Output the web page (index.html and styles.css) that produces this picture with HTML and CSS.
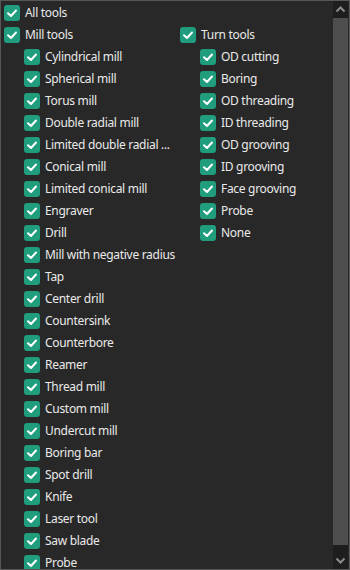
FILE: index.html
```html
<!DOCTYPE html>
<html>
<head>
<meta charset="utf-8">
<link rel="stylesheet" href="styles.css">
</head>
<body>
<div class="panel">
  <div class="content">
    <div class="row lvl0"><span class="cb"><svg viewBox="0 0 16 16"><polyline points="4,8.2 7,11 12,5.5"/></svg></span><span class="lbl">All tools</span></div>
    <div class="cols">
      <div class="col left">
        <div class="row lvl0"><span class="cb"><svg viewBox="0 0 16 16"><polyline points="4,8.2 7,11 12,5.5"/></svg></span><span class="lbl">Mill tools</span></div>
        <div class="row lvl1"><span class="cb"><svg viewBox="0 0 16 16"><polyline points="4,8.2 7,11 12,5.5"/></svg></span><span class="lbl">Cylindrical mill</span></div>
        <div class="row lvl1"><span class="cb"><svg viewBox="0 0 16 16"><polyline points="4,8.2 7,11 12,5.5"/></svg></span><span class="lbl">Spherical mill</span></div>
        <div class="row lvl1"><span class="cb"><svg viewBox="0 0 16 16"><polyline points="4,8.2 7,11 12,5.5"/></svg></span><span class="lbl">Torus mill</span></div>
        <div class="row lvl1"><span class="cb"><svg viewBox="0 0 16 16"><polyline points="4,8.2 7,11 12,5.5"/></svg></span><span class="lbl">Double radial mill</span></div>
        <div class="row lvl1"><span class="cb"><svg viewBox="0 0 16 16"><polyline points="4,8.2 7,11 12,5.5"/></svg></span><span class="lbl">Limited double radial ...</span></div>
        <div class="row lvl1"><span class="cb"><svg viewBox="0 0 16 16"><polyline points="4,8.2 7,11 12,5.5"/></svg></span><span class="lbl">Conical mill</span></div>
        <div class="row lvl1"><span class="cb"><svg viewBox="0 0 16 16"><polyline points="4,8.2 7,11 12,5.5"/></svg></span><span class="lbl">Limited conical mill</span></div>
        <div class="row lvl1"><span class="cb"><svg viewBox="0 0 16 16"><polyline points="4,8.2 7,11 12,5.5"/></svg></span><span class="lbl">Engraver</span></div>
        <div class="row lvl1"><span class="cb"><svg viewBox="0 0 16 16"><polyline points="4,8.2 7,11 12,5.5"/></svg></span><span class="lbl">Drill</span></div>
        <div class="row lvl1"><span class="cb"><svg viewBox="0 0 16 16"><polyline points="4,8.2 7,11 12,5.5"/></svg></span><span class="lbl">Mill with negative radius</span></div>
        <div class="row lvl1"><span class="cb"><svg viewBox="0 0 16 16"><polyline points="4,8.2 7,11 12,5.5"/></svg></span><span class="lbl">Tap</span></div>
        <div class="row lvl1"><span class="cb"><svg viewBox="0 0 16 16"><polyline points="4,8.2 7,11 12,5.5"/></svg></span><span class="lbl">Center drill</span></div>
        <div class="row lvl1"><span class="cb"><svg viewBox="0 0 16 16"><polyline points="4,8.2 7,11 12,5.5"/></svg></span><span class="lbl">Countersink</span></div>
        <div class="row lvl1"><span class="cb"><svg viewBox="0 0 16 16"><polyline points="4,8.2 7,11 12,5.5"/></svg></span><span class="lbl">Counterbore</span></div>
        <div class="row lvl1"><span class="cb"><svg viewBox="0 0 16 16"><polyline points="4,8.2 7,11 12,5.5"/></svg></span><span class="lbl">Reamer</span></div>
        <div class="row lvl1"><span class="cb"><svg viewBox="0 0 16 16"><polyline points="4,8.2 7,11 12,5.5"/></svg></span><span class="lbl">Thread mill</span></div>
        <div class="row lvl1"><span class="cb"><svg viewBox="0 0 16 16"><polyline points="4,8.2 7,11 12,5.5"/></svg></span><span class="lbl">Custom mill</span></div>
        <div class="row lvl1"><span class="cb"><svg viewBox="0 0 16 16"><polyline points="4,8.2 7,11 12,5.5"/></svg></span><span class="lbl">Undercut mill</span></div>
        <div class="row lvl1"><span class="cb"><svg viewBox="0 0 16 16"><polyline points="4,8.2 7,11 12,5.5"/></svg></span><span class="lbl">Boring bar</span></div>
        <div class="row lvl1"><span class="cb"><svg viewBox="0 0 16 16"><polyline points="4,8.2 7,11 12,5.5"/></svg></span><span class="lbl">Spot drill</span></div>
        <div class="row lvl1"><span class="cb"><svg viewBox="0 0 16 16"><polyline points="4,8.2 7,11 12,5.5"/></svg></span><span class="lbl">Knife</span></div>
        <div class="row lvl1"><span class="cb"><svg viewBox="0 0 16 16"><polyline points="4,8.2 7,11 12,5.5"/></svg></span><span class="lbl">Laser tool</span></div>
        <div class="row lvl1"><span class="cb"><svg viewBox="0 0 16 16"><polyline points="4,8.2 7,11 12,5.5"/></svg></span><span class="lbl">Saw blade</span></div>
        <div class="row lvl1"><span class="cb"><svg viewBox="0 0 16 16"><polyline points="4,8.2 7,11 12,5.5"/></svg></span><span class="lbl">Probe</span></div>
      </div>
      <div class="col right">
        <div class="row lvl0"><span class="cb"><svg viewBox="0 0 16 16"><polyline points="4,8.2 7,11 12,5.5"/></svg></span><span class="lbl">Turn tools</span></div>
        <div class="row lvl1"><span class="cb"><svg viewBox="0 0 16 16"><polyline points="4,8.2 7,11 12,5.5"/></svg></span><span class="lbl">OD cutting</span></div>
        <div class="row lvl1"><span class="cb"><svg viewBox="0 0 16 16"><polyline points="4,8.2 7,11 12,5.5"/></svg></span><span class="lbl">Boring</span></div>
        <div class="row lvl1"><span class="cb"><svg viewBox="0 0 16 16"><polyline points="4,8.2 7,11 12,5.5"/></svg></span><span class="lbl">OD threading</span></div>
        <div class="row lvl1"><span class="cb"><svg viewBox="0 0 16 16"><polyline points="4,8.2 7,11 12,5.5"/></svg></span><span class="lbl">ID threading</span></div>
        <div class="row lvl1"><span class="cb"><svg viewBox="0 0 16 16"><polyline points="4,8.2 7,11 12,5.5"/></svg></span><span class="lbl">OD grooving</span></div>
        <div class="row lvl1"><span class="cb"><svg viewBox="0 0 16 16"><polyline points="4,8.2 7,11 12,5.5"/></svg></span><span class="lbl">ID grooving</span></div>
        <div class="row lvl1"><span class="cb"><svg viewBox="0 0 16 16"><polyline points="4,8.2 7,11 12,5.5"/></svg></span><span class="lbl">Face grooving</span></div>
        <div class="row lvl1"><span class="cb"><svg viewBox="0 0 16 16"><polyline points="4,8.2 7,11 12,5.5"/></svg></span><span class="lbl">Probe</span></div>
        <div class="row lvl1"><span class="cb"><svg viewBox="0 0 16 16"><polyline points="4,8.2 7,11 12,5.5"/></svg></span><span class="lbl">None</span></div>
      </div>
    </div>
  </div>
  <div class="scrollbar">
    <div class="arrow"><svg viewBox="0 0 15 15"><polyline points="3.5,9.5 7.5,5.5 11.5,9.5"/></svg></div>
    <div class="track"><div class="thumb"></div></div>
    <div class="arrow"><svg viewBox="0 0 15 15"><polyline points="3.5,5.5 7.5,9.5 11.5,5.5"/></svg></div>
  </div>
</div>
</body>
</html>
```

FILE: styles.css
```css
html, body {
  margin: 0;
  padding: 0;
  background: #282828;
}
.panel {
  width: 350px;
  height: 570px;
  box-sizing: border-box;
  border: 1px solid #575757;
  background: #282828;
  display: flex;
  overflow: hidden;
  font-family: "Noto Sans", "Open Sans", sans-serif;
  font-size: 12px;
  letter-spacing: -0.3px;
  color: #eaeaea;
}
.content {
  flex: 1;
  overflow: hidden;
  padding-top: 1px;
}
.cols {
  display: flex;
}
.col.left {
  width: 176px;
}
.col.right {
  flex: 1;
}
.row {
  height: 22px;
  display: flex;
  align-items: center;
  white-space: nowrap;
}
.lvl0 {
  padding-left: 3px;
}
.lvl1 {
  padding-left: 23px;
}
.cb {
  width: 16px;
  height: 16px;
  border-radius: 3px;
  background: #1f9d7d;
  flex: none;
  display: flex;
}
.cb svg {
  width: 16px;
  height: 16px;
}
.cb polyline {
  fill: none;
  stroke: #ffffff;
  stroke-width: 2;
  stroke-linecap: round;
  stroke-linejoin: round;
}
.lbl {
  margin-left: 5px;
  line-height: 16px;
}
.scrollbar {
  width: 15px;
  margin-right: 1px;
  background: #1e1e1e;
  display: flex;
  flex-direction: column;
  flex: none;
}
.arrow {
  height: 17px;
  display: flex;
  align-items: center;
  justify-content: center;
  flex: none;
}
.arrow svg {
  width: 15px;
  height: 15px;
}
.arrow polyline {
  fill: none;
  stroke: #8c8c8c;
  stroke-width: 2;
}
.track {
  flex: 1;
  display: flex;
  flex-direction: column;
}
.thumb {
  height: 527px;
  background: #4e4e4e;
}
```
